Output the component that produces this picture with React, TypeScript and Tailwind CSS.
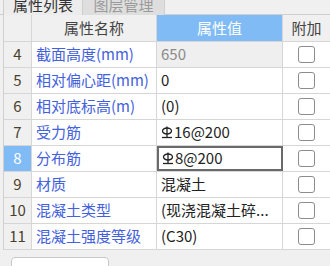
import React from "react"

type Row = {
  no: number
  name: string
  value: React.ReactNode
  disabled?: boolean
  selected?: boolean
}

function RebarMark() {
  return (
    <svg width="12" height="13" viewBox="0 0 12 13" className="mr-[1px] shrink-0">
      <ellipse cx="6" cy="5" rx="4.5" ry="3" fill="none" stroke="#222" strokeWidth="1.3" />
      <line x1="6" y1="0.5" x2="6" y2="11.5" stroke="#222" strokeWidth="1.3" />
      <line x1="1" y1="11.5" x2="11" y2="11.5" stroke="#222" strokeWidth="1.3" />
    </svg>
  )
}

const rows: Row[] = [
  { no: 4, name: "截面高度(mm)", value: "650", disabled: true },
  { no: 5, name: "相对偏心距(mm)", value: "0" },
  { no: 6, name: "相对底标高(m)", value: "(0)" },
  { no: 7, name: "受力筋", value: <span className="flex items-center"><RebarMark />16@200</span> },
  { no: 8, name: "分布筋", value: <span className="flex items-center"><RebarMark />8@200</span>, selected: true },
  { no: 9, name: "材质", value: "混凝土" },
  { no: 10, name: "混凝土类型", value: "(现浇混凝土碎..." },
  { no: 11, name: "混凝土强度等级", value: "(C30)" },
]

function CheckBox() {
  return <div className="w-[17px] h-[17px] rounded-[3px] border-[1.5px] border-[#8c8c8c] bg-white" />
}

export default function App() {
  return (
    <div
      className="w-[330px] h-[266px] overflow-hidden bg-[#f0f0f0] text-[15px]"
      style={{ fontFamily: '"Noto Sans CJK SC", "Noto Sans", sans-serif' }}
    >
      {/* tabs */}
      <div className="flex h-[15px] pl-[3px] border-b border-[#cfcfcf]">
        <div className="w-[80px] h-[15px] flex items-end justify-center overflow-hidden bg-[#ececec] border-l border-r border-[#cfcfcf] text-[#333]">
          <span className="leading-[15px] mb-[3px]">属性列表</span>
        </div>
        <div className="w-[82px] h-[15px] flex items-end justify-center overflow-hidden bg-[#dedede] border-r border-[#cfcfcf] text-[#9a9a9a]">
          <span className="leading-[15px] mb-[3px]">图层管理</span>
        </div>
      </div>

      {/* table */}
      <div className="ml-[3px] border-l border-[#cfcfcf]">
        <div className="flex h-[27px] border-b border-[#d6d6d6] bg-[#f0f0f0] text-[#444]">
          <div className="w-[28px] border-r border-[#d6d6d6]" />
          <div className="w-[125px] border-r border-[#d6d6d6] flex items-center justify-center">属性名称</div>
          <div className="w-[126px] border-r border-[#d6d6d6] flex items-center justify-center bg-[#80bbf6] text-white">属性值</div>
          <div className="flex-1 flex items-center justify-center">附加</div>
        </div>
        {rows.map(r => (
          <div key={r.no} className="flex h-[26px] border-b border-[#d6d6d6]">
            <div
              className={
                r.selected
                  ? "w-[28px] border-r border-[#d6d6d6] flex items-center justify-center bg-[#80bbf6] text-white"
                  : "w-[28px] border-r border-[#d6d6d6] flex items-center justify-center bg-[#f0f0f0] text-[#4a3f2c]"
              }
            >
              {r.no}
            </div>
            <div className="w-[125px] border-r border-[#d6d6d6] flex items-center pl-[4px] bg-white text-[#4361dd] whitespace-nowrap overflow-hidden">
              {r.name}
            </div>
            <div
              className={
                r.disabled
                  ? "w-[126px] border-r border-[#d6d6d6] flex items-center pl-[4px] bg-[#efefef] text-[#8a8a8a]"
                  : r.selected
                  ? "w-[126px] border-2 border-[#6a6a6a] flex items-center pl-[3px] bg-white text-[#222]"
                  : "w-[126px] border-r border-[#d6d6d6] flex items-center pl-[4px] bg-white text-[#222] whitespace-nowrap overflow-hidden"
              }
            >
              {r.value}
            </div>
            <div className="flex-1 flex items-center justify-center bg-white">
              <CheckBox />
            </div>
          </div>
        ))}
      </div>

      {/* bottom bar */}
      <div className="pt-[7px] pl-[11px]">
        <div className="w-[98px] h-[26px] rounded-[4px] border border-[#c8c8c8] bg-white flex items-start justify-center pt-[4px] text-[#333] text-[14px]">
          全部展开
        </div>
      </div>
    </div>
  )
}
